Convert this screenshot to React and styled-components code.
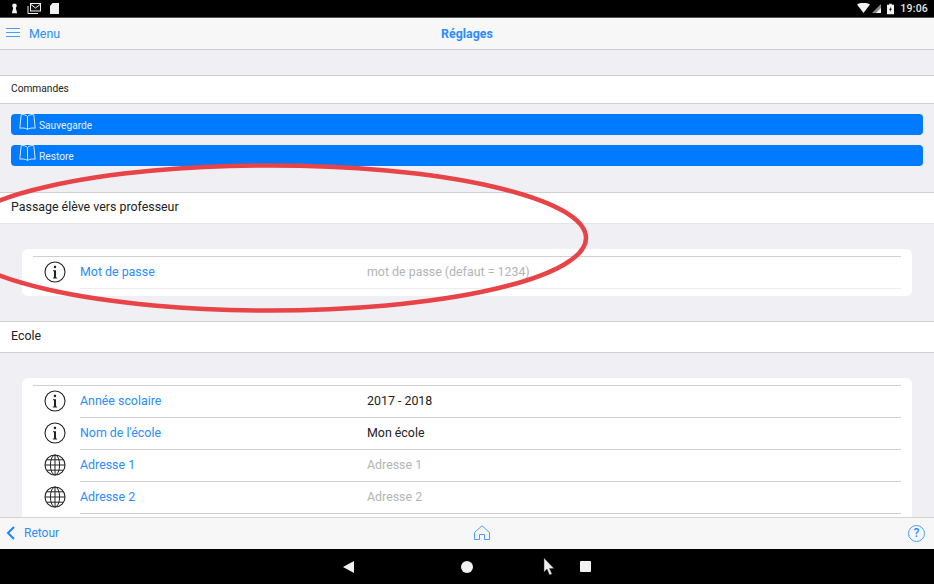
import React from 'react'
import styled, { createGlobalStyle } from 'styled-components'

const Global = createGlobalStyle`
  html, body { margin: 0; padding: 0; background: #000; }
  body { font-family: Roboto, "Liberation Sans", sans-serif; }
`

const InfoIcon = () => (
  <svg width="22" height="22" viewBox="0 0 22 22">
    <circle cx="11" cy="11" r="10" fill="none" stroke="#222" strokeWidth="1.1" />
    <rect x="9.900" y="4.800" width="2.200" height="2.300" fill="#222" />
    <path d="M9 9.200h3v7.200h1.200v1H8.900v-1h1.100v-6.200h-1z" fill="#222" />
  </svg>
)

const GlobeIcon = () => (
  <svg width="22" height="22" viewBox="0 0 22 22" fill="none" stroke="#222" strokeWidth="1">
    <circle cx="11" cy="11" r="10" strokeWidth="1.100" />
    <ellipse cx="11" cy="11" rx="4.600" ry="10" />
    <path d="M11 1v20M1 11h20M2.600 5.800h16.800M2.600 16.200h16.800" />
  </svg>
)

const BookIcon = () => (
  <svg width="17" height="17" viewBox="0 0 17 17" fill="none" stroke="#d5e8ff" strokeWidth="1">
    <path d="M8.500 2.500C7 .8 4.500.4 2.200.6L.8 14.200c2.800-.5 5.500-.2 7.700 1.200 2.200-1.400 4.900-1.700 7.700-1.200L14.800.6C12.500.4 10 .8 8.500 2.500z" />
    <path d="M8.500 2.500v12.900" />
  </svg>
)

const Page = styled.div`
  position: relative;
  width: 934px;
  height: 584px;
  overflow: hidden;
  display: flex;
  flex-direction: column;
`

const StatusBar = styled.div`
  height: 17px;
  background: #000;
  display: flex;
  align-items: center;
  justify-content: space-between;
  padding: 0 6px 0 11px;
  color: #e8e8e8;
  border-bottom: 1px solid #555;
`

const StatusGroup = styled.div`
  display: flex;
  align-items: center;
  gap: ${p => p.$gap}px;
`

const Clock = styled.span`
  font-size: 10.500px;
  font-weight: 500;
  letter-spacing: 0.2px;
`

const NavBar = styled.div`
  height: 30px;
  background: #f7f7f7;
  border-bottom: 1px solid #cfcfcf;
  display: grid;
  grid-template-columns: 1fr auto 1fr;
  align-items: center;
  padding: 0 6px 1px;
  flex-shrink: 0;
`

const NavLeft = styled.div`
  display: flex;
  align-items: center;
  gap: 9px;
  color: #2a8cff;
  font-size: 12.400px;
`

const NavTitle = styled.div`
  color: #2a8cff;
  font-size: 12.400px;
  font-weight: 700;
`

const Content = styled.div`
  flex: 1;
  min-height: 0;
  overflow: hidden;
  background: #efeff4;
  padding-top: 25px;
`

const SectionHeader = styled.div`
  background: #fff;
  border-top: 1px solid #cfcfcf;
  border-bottom: 1px solid ${p => (p.$light ? '#e4e4e4' : '#cfcfcf')};
  height: ${p => p.$height}px;
  display: flex;
  align-items: center;
  padding: 0 0 ${p => p.$lift}px 11px;
  color: #222;
  font-size: ${p => p.$size}px;
`

const Buttons = styled.div`
  display: flex;
  flex-direction: column;
  gap: 10px;
  padding: 10px 11px 26px;
`

const BlueButton = styled.div`
  height: 21px;
  background: #007aff;
  border-radius: 4px;
  display: flex;
  padding-left: 8px;
  gap: 3px;
  color: #e6f1ff;
  font-size: 10.200px;
  line-height: 23px;
`

const Card = styled.div`
  background: #fff;
  border-radius: 6px;
  margin: ${p => p.$top}px 22px ${p => p.$bottom}px;
  padding: 7px 11px 7px;
`

const Rows = styled.div`
  border-top: 1px solid #d0d0d0;
`

const Row = styled.div`
  height: 30px;
  padding-bottom: 2px;
  display: flex;
  align-items: center;
  position: relative;
  &::after {
    content: '';
    position: absolute;
    left: 47px;
    right: 0;
    bottom: 0;
    height: 1px;
    background: ${p => (p.$light ? '#ededed' : '#cfcfcf')};
  }
`

const IconCell = styled.div`
  width: 47px;
  padding-left: 10.500px;
  box-sizing: border-box;
  display: flex;
`

const Label = styled.div`
  width: 287px;
  padding-bottom: 2px;
  color: #2a8cff;
  font-size: 12.400px;
`

const Value = styled.div`
  padding-bottom: 2px;
  font-size: 12.400px;
  color: ${p => (p.$placeholder ? '#b4b4b4' : '#222')};
`

const ToolBar = styled.div`
  height: 30px;
  background: #f7f7f7;
  border-top: 1px solid #d4d4d4;
  display: grid;
  grid-template-columns: 468px auto 1fr;
  align-items: center;
  padding: 0 9px 1px 6px;
  flex-shrink: 0;
`

const BackLink = styled.div`
  display: flex;
  align-items: center;
  gap: 9px;
  color: #2a8cff;
  font-size: 12px;
`

const HelpCell = styled.div`
  display: flex;
  justify-content: flex-end;
`

const HelpCircle = styled.div`
  width: 15px;
  height: 15px;
  border: 1px solid #4a9dff;
  border-radius: 50%;
  color: #2a8cff;
  font-size: 12px;
  font-weight: 500;
  display: flex;
  align-items: center;
  justify-content: center;
`

const SystemBar = styled.div`
  height: 35px;
  background: #000;
  flex-shrink: 0;
  display: flex;
  align-items: center;
  padding-left: 343px;
  gap: 106px;
`

const Overlay = styled.svg`
  position: absolute;
  left: 0;
  top: 0;
  pointer-events: none;
`

const Cursor = styled.svg`
  position: absolute;
  left: 543px;
  top: 558px;
`

const ecole = [
  { icon: 'info', label: 'Année scolaire', value: '2017 - 2018' },
  { icon: 'info', label: "Nom de l'école", value: 'Mon école' },
  { icon: 'globe', label: 'Adresse 1', value: 'Adresse 1', placeholder: true },
  { icon: 'globe', label: 'Adresse 2', value: 'Adresse 2', placeholder: true },
]

export default function App() {
  return (
    <Page>
      <Global />
      <StatusBar>
        <StatusGroup $gap={9}>
          <svg width="7" height="11" viewBox="0 0 8 11" fill="#f2f2f2">
            <path d="M2 0h4l.6 3L5.500 5 7 10.500V11H1v-.5L2.500 5 1.400 3z" />
          </svg>
          <svg width="14" height="11" viewBox="0 0 14 11" fill="none" stroke="#f2f2f2">
            <rect x="3.500" y=".5" width="10" height="7.500" fill="#111" />
            <path d="M4 1.500l4.500 3.500L13 1.500M1 3v7.500h10" />
          </svg>
          <svg width="9" height="11" viewBox="0 0 9 11" fill="#f2f2f2">
            <path d="M2.500 0H9v11H0V3z" />
          </svg>
        </StatusGroup>
        <StatusGroup $gap={6}>
          <svg width="24" height="11" viewBox="0 0 24 11">
            <path d="M0 1.500C3.500-.8 9.500-.8 13 1.500L6.500 10z" fill="#f2f2f2" />
            <path d="M24 1v9H15z" fill="#888" />
            <path d="M24 5v5h-5z" fill="#f2f2f2" />
          </svg>
          <svg width="7" height="12" viewBox="0 0 8 12">
            <path d="M2.500 0h3v1H8v11H0V1h2.500z" fill="#f2f2f2" />
            <path d="M4.500 3L2.500 7h1.300l-.3 2.500L5.500 5.700H4.200z" fill="#000" />
          </svg>
          <Clock>19:06</Clock>
        </StatusGroup>
      </StatusBar>

      <NavBar>
        <NavLeft>
          <svg width="14" height="10" viewBox="0 0 14 10" stroke="#4a9dff" strokeWidth="1">
            <path d="M0 .5h14M0 4.500h14M0 8.500h14" />
          </svg>
          Menu
        </NavLeft>
        <NavTitle>Réglages</NavTitle>
      </NavBar>

      <Content>
        <SectionHeader $height={25} $lift={2} $size={10.2}>Commandes</SectionHeader>
        <Buttons>
          <BlueButton><BookIcon />Sauvegarde</BlueButton>
          <BlueButton><BookIcon />Restore</BlueButton>
        </Buttons>

        <SectionHeader $height={27} $lift={3} $size={12.4} $light>Passage élève vers professeur</SectionHeader>
        <Card $top={25} $bottom={25}>
          <Rows>
            <Row $light>
              <IconCell><InfoIcon /></IconCell>
              <Label>Mot de passe</Label>
              <Value $placeholder>mot de passe (defaut = 1234)</Value>
            </Row>
          </Rows>
        </Card>

        <SectionHeader $height={27} $lift={3} $size={12.4}>Ecole</SectionHeader>
        <Card $top={25} $bottom={0}>
          <Rows>
            {ecole.map(item => (
              <Row key={item.label}>
                <IconCell>{item.icon === 'info' ? <InfoIcon /> : <GlobeIcon />}</IconCell>
                <Label>{item.label}</Label>
                <Value $placeholder={item.placeholder}>{item.value}</Value>
              </Row>
            ))}
          </Rows>
        </Card>
      </Content>

      <ToolBar>
        <BackLink>
          <svg width="9" height="14" viewBox="0 0 9 14" fill="none" stroke="#1f84ff" strokeWidth="2">
            <path d="M8 1L2 7l6 6" />
          </svg>
          Retour
        </BackLink>
        <svg width="16" height="16" viewBox="0 0 16 16" fill="none" stroke="#4a9dff" strokeWidth="1">
          <path d="M.5 7.500L8 .8l7.500 6.700v7h-5V9.500h-5v5h-5z" />
        </svg>
        <HelpCell><HelpCircle>?</HelpCircle></HelpCell>
      </ToolBar>

      <SystemBar>
        <svg width="12" height="12" viewBox="0 0 12 12" fill="#f2f2f2"><path d="M11 0v12L0 6z" /></svg>
        <svg width="12" height="12" viewBox="0 0 12 12" fill="#f2f2f2"><circle cx="6" cy="6" r="6" /></svg>
        <svg width="12" height="12" viewBox="0 0 12 12" fill="#f2f2f2"><rect x="1" width="11" height="11" rx="1" /></svg>
      </SystemBar>

      <Overlay width="934" height="584" viewBox="0 0 934 584">
        <ellipse cx="270" cy="238" rx="316" ry="72.500" fill="none" stroke="#e84347" strokeWidth="4.500" />
      </Overlay>
      <Cursor width="12" height="18" viewBox="0 0 12 18">
        <path d="M1 0v14l3-3 2.500 6 2.500-1-2.500-5.500H11z" fill="#eee" stroke="#333" strokeWidth=".5" />
      </Cursor>
    </Page>
  )
}
